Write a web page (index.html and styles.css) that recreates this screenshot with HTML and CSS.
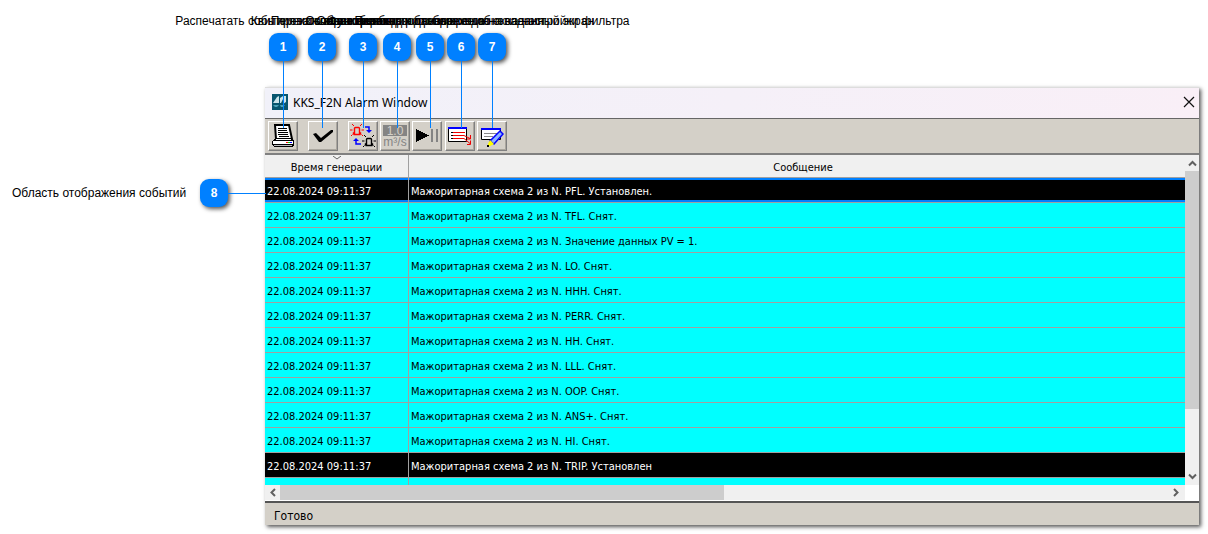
FILE: index.html
```
<!DOCTYPE html>
<html lang="ru">
<head>
<meta charset="utf-8">
<title>KKS_F2N Alarm Window</title>
<link rel="stylesheet" href="styles.css">
</head>
<body>
<main class="figure">
  <section class="window">
    <header class="titlebar">
      <svg class="logo" width="16" height="16" viewBox="0 0 16 16" aria-hidden="true">
        <rect width="16" height="16" fill="#07566f"/>
        <path d="M1 9L5 3l2-1v7zM8 9V4l3-2h3v6l-3 2V5L9 9z" fill="#c9e4ea"/>
        <path d="M1 11h6l-2 2H3zM8 11h5l-2 2H9z" fill="#4ba3b8"/>
      </svg>
      <h1 class="title">KKS_F2N Alarm Window</h1>
      <button class="close" type="button" aria-label="Закрыть">
        <svg width="12" height="12" viewBox="0 0 12 12"><path d="M1 1l10 10M11 1L1 11" stroke="#111" stroke-width="1.200" fill="none"/></svg>
      </button>
    </header>
    <div class="toolbar">
      <button class="tool" type="button" aria-label="Печать">
        <svg width="24" height="24" viewBox="0 0 24 24" shape-rendering="crispEdges">
          <path d="M4 1h14l3 14H5z" fill="#fff" stroke="#000" stroke-width="2" shape-rendering="auto"/>
          <path d="M7 4.500h9M7 6.500h9M7 8.500h10M7 10.500h10M8 12.500h10" stroke="#000"/>
          <path d="M4 14h17l2 3v4l-2 2H3l-2-2v-4z" fill="#000"/>
          <path d="M5 15h14l1 1H4zM2 17h20v3H2z" fill="#fff"/>
          <path d="M3 21h18v1H3z" fill="#bbb"/>
          <path d="M15 18h2v1h-2z" fill="#f00"/><path d="M17 18h2v1h-2z" fill="#0c0"/><path d="M19 18h2v1h-2z" fill="#00f"/>
        </svg>
      </button>
      <button class="tool wide" type="button" aria-label="Квитировать">
        <svg width="24" height="24" viewBox="0 0 24 24"><path d="M2 10l3-1 5 5L20 6h2v2L10 18H8z" fill="#000"/></svg>
      </button>
      <button class="tool wide" type="button" aria-label="Переключение">
        <svg width="26" height="26" viewBox="0 0 26 26">
          <g id="siren" fill="none" stroke="#f00"><path d="M4.500 9V5.500q0-1 1-1h3q1 0 1 1V9M3.500 11.500V10h1V9M9.500 9v1h1v1.500M3.500 11.500h7" stroke-width="1.400"/><path d="M2 1l2 2M12 1l-2 2M0 7h2.500M11.500 7H14M1 13l1.500-1.500M13 13l-1.500-1.500"/></g>
          <g fill="none" stroke="#000"><path d="M16.500 20v-3.500q0-1 1-1h3q1 0 1 1V20M15.500 22.500V21h1v-1M21.500 20v1h1v1.500M15.500 22.500h7" stroke-width="1.400"/><path d="M14 12l2 2M24 12l-2 2M12 18h2.500M23.500 18H26M13 24l1.500-1.500M25 24l-1.500-1.500"/></g>
          <path d="M15 4h4v4M11 21H6v-4" fill="none" stroke="#00f" stroke-width="1.500"/>
          <path d="M16 7h6l-3 3zM3 18h6l-3-3z" fill="#00f"/>
        </svg>
      </button>
      <button class="tool tight" type="button">
        <span class="value">1.0</span><span class="unit">m³/s</span>
      </button>
      <button class="tool tight" type="button" aria-label="Пауза">
        <svg width="24" height="24" viewBox="0 0 24 24" shape-rendering="crispEdges"><path d="M1 5l13 6.500L1 18z" fill="#000"/><path d="M16 5h2v13h-2zM21 5h2v13h-2z" fill="#848484"/></svg>
      </button>
      <button class="tool loose" type="button" aria-label="Переход">
        <svg width="24" height="24" viewBox="0 0 24 24">
          <path d="M.5 3.500h18v14H.5z" fill="#fff" stroke="#000"/><path d="M0 3h19v2H0z" fill="#00f"/>
          <path d="M5 8.500h12M5 11.500h11l6 3M5 14.500h11l6 5M22.500 11v4H19M22.500 16.500v4H19" stroke="#e00" fill="none"/><path d="M3 8h2v1H3zM3 11h2v1H3zM3 14h2v1H3z" fill="#000"/>
        </svg>
      </button>
      <button class="tool tight" type="button" aria-label="Фильтр">
        <svg width="24" height="24" viewBox="0 0 24 24">
          <path d="M1.500 4.500h19v11h-19z" fill="#fff" stroke="#000"/><path d="M1 4h20v2H1z" fill="#00f"/>
          <path d="M4 9.500h13M4 12.500h9" stroke="#888"/>
          <path d="M20 7l3 3-9 10-4-3z" fill="#8db4ff" stroke="#00f" stroke-width="1.500"/>
          <path d="M10 16l4 4-4 2H8v-2z" fill="#ff0"/><path d="M7 21h2v2H7z" fill="#000"/>
        </svg>
      </button>
    </div>
    <div class="pane">
      <table class="events">
        <thead><tr><th class="time"><svg class="sort" width="8" height="4" viewBox="0 0 8 4" aria-hidden="true"><path d="M0 0l4 3 4-3" stroke="#666" fill="none"/></svg>Время генерации</th><th class="message">Сообщение</th></tr></thead>
        <tbody>
          <tr class="alarm selected"><td>22.08.2024 09:11:37</td><td>Мажоритарная схема 2 из N. PFL. Установлен.</td></tr>
          <tr><td>22.08.2024 09:11:37</td><td>Мажоритарная схема 2 из N. TFL. Снят.</td></tr>
          <tr><td>22.08.2024 09:11:37</td><td>Мажоритарная схема 2 из N. Значение данных PV = 1.</td></tr>
          <tr><td>22.08.2024 09:11:37</td><td>Мажоритарная схема 2 из N. LO. Снят.</td></tr>
          <tr><td>22.08.2024 09:11:37</td><td>Мажоритарная схема 2 из N. HHH. Снят.</td></tr>
          <tr><td>22.08.2024 09:11:37</td><td>Мажоритарная схема 2 из N. PERR. Снят.</td></tr>
          <tr><td>22.08.2024 09:11:37</td><td>Мажоритарная схема 2 из N. HH. Снят.</td></tr>
          <tr><td>22.08.2024 09:11:37</td><td>Мажоритарная схема 2 из N. LLL. Снят.</td></tr>
          <tr><td>22.08.2024 09:11:37</td><td>Мажоритарная схема 2 из N. OOP. Снят.</td></tr>
          <tr><td>22.08.2024 09:11:37</td><td>Мажоритарная схема 2 из N. ANS+. Снят.</td></tr>
          <tr><td>22.08.2024 09:11:37</td><td>Мажоритарная схема 2 из N. HI. Снят.</td></tr>
          <tr class="alarm"><td>22.08.2024 09:11:37</td><td>Мажоритарная схема 2 из N. TRIP. Установлен</td></tr>
          <tr class="partial"><td></td><td></td></tr>
        </tbody>
      </table>
      <div class="vscroll">
        <svg class="arrow" width="14" height="16" viewBox="0 0 14 16"><path d="M4 10.500l3.500-3.500L11 10.500" class="chevron"/></svg>
        <div class="vthumb"></div>
        <svg class="arrow" width="14" height="16" viewBox="0 0 14 16"><path d="M4 5.500L7.500 9 11 5.500" class="chevron"/></svg>
      </div>
      <div class="hscroll">
        <svg class="arrow" width="15" height="15" viewBox="0 0 15 15"><path d="M10 4L6.500 7.500 10 11" class="chevron"/></svg>
        <div class="htrack"><div class="hthumb"></div></div>
        <svg class="arrow" width="18" height="15" viewBox="0 0 18 15"><path d="M7 4l3.500 3.500L7 11" class="chevron"/></svg>
      </div>
    </div>
    <footer class="status">Готово</footer>
  </section>

  <div class="callout c1"><span class="label">Распечатать события из списка тревог</span><span class="badge">1</span></div>
  <div class="callout c2"><span class="label">Квитировать все события</span><span class="badge">2</span></div>
  <div class="callout c3"><span class="label">Переключение основных данных</span><span class="badge">3</span></div>
  <div class="callout c4"><span class="label">Отображение единиц измерения</span><span class="badge">4</span></div>
  <div class="callout c5"><span class="label">Остановка и возобновление обновления</span><span class="badge">5</span></div>
  <div class="callout c6"><span class="label">Функция быстрого перехода на заданный экран</span><span class="badge">6</span></div>
  <div class="callout c7"><span class="label">Переход к отображению окна настройки фильтра</span><span class="badge">7</span></div>
  <div class="callout side"><span class="label">Область отображения событий</span><span class="badge">8</span></div>
</main>
</body>
</html>
```
FILE: styles.css
```
* { box-sizing: border-box; }
body { margin: 0; background: #fff; color: #000; font-family: "Liberation Sans", Arial, sans-serif; }
.figure { position: relative; padding: 87px 9px 9px 265px; }

.window { border-top: 1px solid #ddd; box-shadow: 2px 2px 4px #555; background: #d4d0c8; font-family: "DejaVu Sans Condensed", "DejaVu Sans", sans-serif; font-size: 11px; }
.titlebar { display: flex; align-items: center; height: 31px; padding: 0 4px 2px 7px; border-bottom: 1px solid #666; background: linear-gradient(90deg, #f1f1f9, #f9eff7); }
.title { flex: 1; margin: 0 0 0 5px; font: 12px "Noto Sans", sans-serif; }
.close { display: flex; padding: 0; border: 0; background: none; }
.toolbar { display: flex; height: 36px; padding: 2px 3px; border-bottom: 2px solid #808080; }
.tool { display: flex; flex-direction: column; align-items: center; justify-content: center; width: 30px; height: 30px; padding: 0; border: 1px solid; border-color: #fff #808080 #808080 #fff; box-shadow: inset -1px -1px #aaa69e; background: #d4d0c8; }
.wide { margin-left: 10px; }
.tight { margin-left: 2px; }
.loose { margin-left: 3px; }
.value, .unit { width: 24px; font: 12px/12px "Liberation Sans", sans-serif; color: #848484; }
.value { height: 11px; background: #848484; color: #d4d0c8; }

.pane { display: grid; grid-template-columns: 1fr 14px; background: #fff; border-bottom: 2px solid #555; padding-bottom: 1px; }
.events { width: 100%; border-collapse: separate; border-spacing: 0; table-layout: fixed; background: #0ff; }
.events th, .events td { height: 25px; padding: 2px 2px 0; border-bottom: 1px solid #a0a0a0; text-align: left; font-weight: normal; white-space: nowrap; }
.events th { position: relative; height: 23px; background: #f0f0f0; text-align: center; }
.events .time { width: 144px; }
.events .message { padding-left: 14px; }
.events tr > :first-child { border-right: 1px solid #a0a0a0; }
.sort { position: absolute; top: 1px; left: 68px; }
.alarm { background: #000; color: #fff; }
.selected td { box-shadow: inset 0 2px #0080ff, inset 0 -2px #0080ff; }
.events .partial td { height: 7px; border-bottom: 0; }
.vscroll { display: flex; flex-direction: column; background: #f0f0f0; }
.arrow { flex: none; background: #f0f0f0; }
.vthumb { height: 238px; background: #cdcdcd; }
.vscroll .arrow:last-child { margin-top: auto; }
.chevron { fill: none; stroke: #606060; stroke-width: 2; }
.hscroll { display: flex; background: #f0f0f0; }
.htrack { flex: 1; }
.hthumb { width: 50%; height: 15px; background: #cdcdcd; }
.status { padding: 5px 9px 1px; font-size: 12px; line-height: 16px; }

.callout { position: absolute; top: 13px; display: flex; flex-direction: column; align-items: center; gap: 4px; width: 28px; font-size: 12px; line-height: 16px; white-space: nowrap; }
.callout::after { content: ""; position: absolute; top: 48px; left: 14px; width: 1px; height: 67px; background: #0080ff; }
.badge { flex: none; width: 28px; height: 28px; border-radius: 9px; background: #0080ff; box-shadow: 2px 2px 4px #555; color: #fff; font-weight: bold; line-height: 28px; text-align: center; }
.c1 { left: 269px; }
.c2 { left: 308px; }
.c3 { left: 349px; }
.c4 { left: 383px; }
.c5 { left: 416px; }
.c6 { left: 447px; }
.c7 { left: 478px; }
.side { top: 179px; left: 12px; flex-direction: row; justify-content: space-between; width: 216px; }
.side::after { top: 14px; left: 216px; width: 38px; height: 1px; }
```
